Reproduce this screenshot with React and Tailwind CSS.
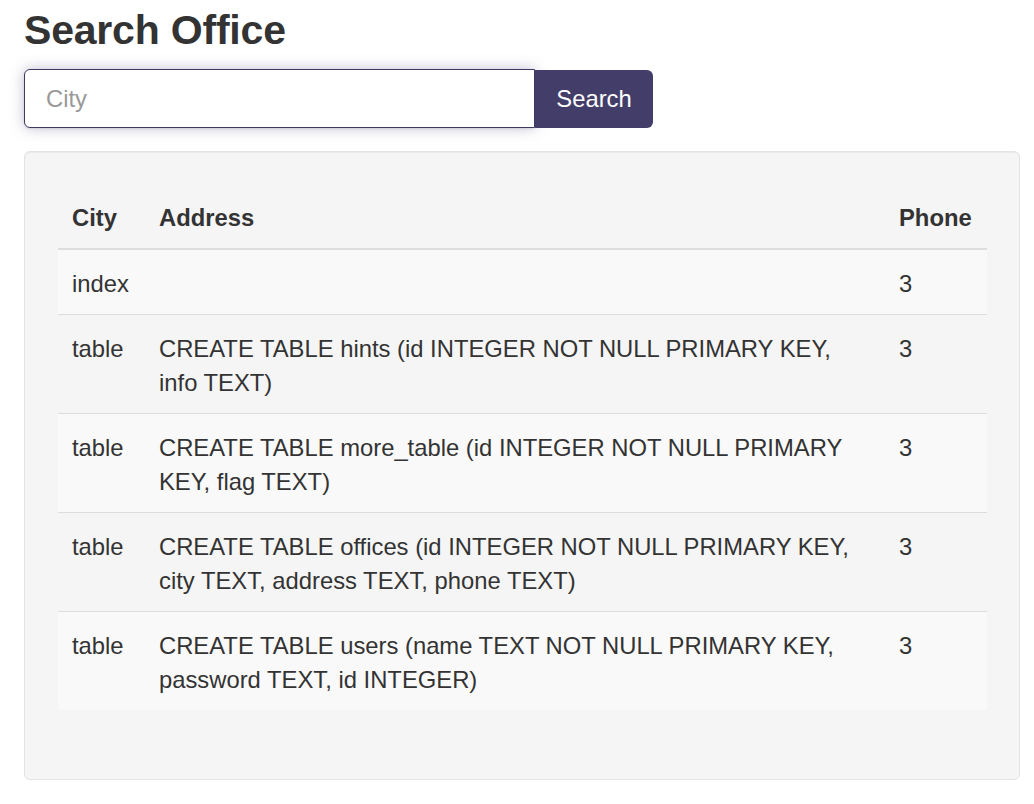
const rows = [
  { type: 'index', sql: '', phone: '3' },
  { type: 'table', sql: 'CREATE TABLE hints (id INTEGER NOT NULL PRIMARY KEY, info TEXT)', phone: '3' },
  { type: 'table', sql: 'CREATE TABLE more_table (id INTEGER NOT NULL PRIMARY KEY, flag TEXT)', phone: '3' },
  { type: 'table', sql: 'CREATE TABLE offices (id INTEGER NOT NULL PRIMARY KEY, city TEXT, address TEXT, phone TEXT)', phone: '3' },
  { type: 'table', sql: 'CREATE TABLE users (name TEXT NOT NULL PRIMARY KEY, password TEXT, id INTEGER)', phone: '3' },
]

export default function App() {
  return (
    <div className="min-h-[804px] bg-white text-[#333] font-['Liberation_Sans',Arial,sans-serif] pl-[24px] pt-[8px]">
      <h1 className="text-[41px] leading-[45px] font-bold tracking-[-0.2px]">Search Office</h1>

      {/* Search form */}
      <div className="flex mt-[16px] h-[59px] w-[629px]">
        <input
          type="text"
          placeholder="City"
          className="w-[511px] h-[59px] border border-[#3c3a63] rounded-l-[6px] px-[21px] text-[23.8px] text-[#555] placeholder:text-[#999] bg-white outline-none shadow-[0_1px_2px_rgba(0,0,0,0.08),0_0_14px_rgba(80,70,130,0.35)]"
        />
        <button className="w-[118px] h-[58px] mt-[1px] bg-[#433e69] text-white text-[23.8px] rounded-r-[6px]">
          Search
        </button>
      </div>

      {/* Results well */}
      <div className="mt-[23px] w-[996px] bg-[#f5f5f5] border border-[#e3e3e3] rounded-[6px] pt-[32px] pb-[33px] pl-[33px] pr-[32px] shadow-[inset_0_1px_1px_rgba(0,0,0,0.05)]">
        <table className="w-full border-collapse text-[23.8px] leading-[34px] mb-[36px]">
          <thead>
            <tr className="border-b-2 border-[#ddd]">
              <th className="text-left font-bold px-[14px] pt-[17px] pb-[13px] w-[87px]">City</th>
              <th className="text-left font-bold px-[14px] pt-[17px] pb-[13px]">Address</th>
              <th className="text-left font-bold px-[14px] pt-[17px] pb-[13px] w-[102px]">Phone</th>
            </tr>
          </thead>
          <tbody>
            {rows.map((r, i) => (
              <tr
                key={i}
                className={(i % 2 === 0 ? 'bg-[#f9f9f9]' : '') + (i > 0 ? ' border-t border-[#ddd]' : '')}
              >
                <td className="align-top px-[14px] pt-[17px] pb-[13px]">{r.type}</td>
                <td className="align-top px-[14px] pt-[17px] pb-[13px]">{r.sql}</td>
                <td className="align-top px-[14px] pt-[17px] pb-[13px]">{r.phone}</td>
              </tr>
            ))}
          </tbody>
        </table>
      </div>
    </div>
  )
}
